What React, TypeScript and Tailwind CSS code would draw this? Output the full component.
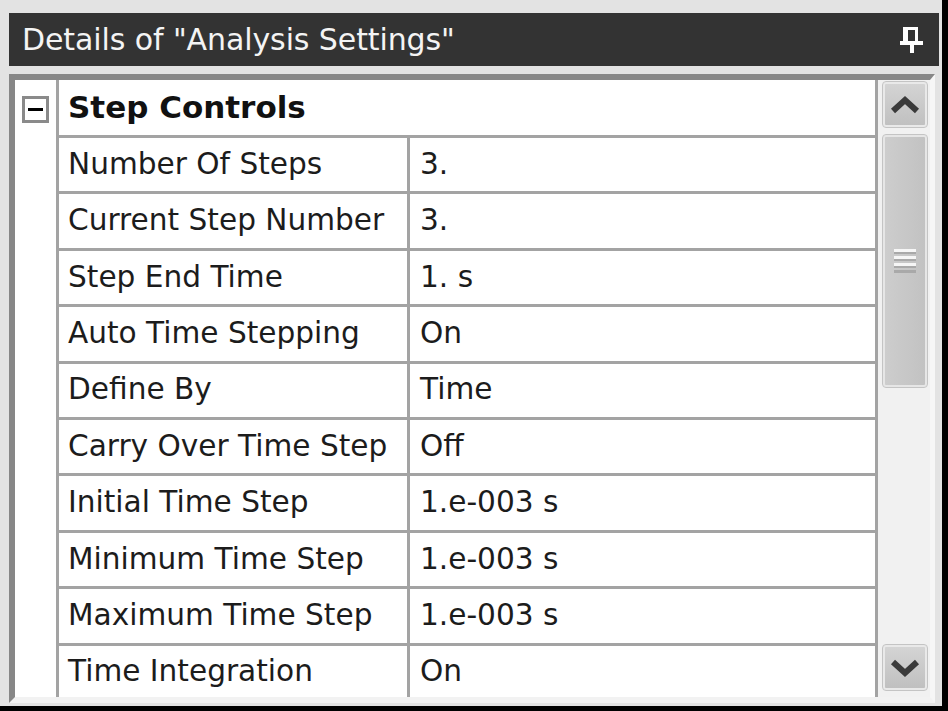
import React from "react";

const rows: [string, string][] = [
  ["Number Of Steps", "3."],
  ["Current Step Number", "3."],
  ["Step End Time", "1. s"],
  ["Auto Time Stepping", "On"],
  ["Define By", "Time"],
  ["Carry Over Time Step", "Off"],
  ["Initial Time Step", "1.e-003 s"],
  ["Minimum Time Step", "1.e-003 s"],
  ["Maximum Time Step", "1.e-003 s"],
  ["Time Integration", "On"],
];

function Pin() {
  return (
    <svg width="23" height="26" viewBox="0 0 23 26" fill="#ffffff">
      <rect x="3" y="0" width="15" height="3" />
      <rect x="3" y="0" width="5" height="16" />
      <rect x="15" y="0" width="3" height="16" />
      <rect x="0" y="14" width="23" height="4" />
      <rect x="10" y="18" width="4" height="8" />
    </svg>
  );
}

function Chevron({ down }: { down?: boolean }) {
  return (
    <svg width="30" height="20" viewBox="0 0 30 20">
      <path
        d={down ? "M3 4 L15 15 L27 4" : "M3 16 L15 5 L27 16"}
        fill="none"
        stroke="#3a3a3a"
        strokeWidth="6"
        strokeLinejoin="miter"
      />
    </svg>
  );
}

function ScrollButton({ down }: { down?: boolean }) {
  return (
    <div className="h-[45px] w-[44px] rounded-[3px] border-2 border-[#e9e9e9] bg-gradient-to-b from-[#d4d4d4] to-[#c0c0c0] outline outline-1 outline-[#c4c4c4] flex items-center justify-center">
      <Chevron down={down} />
    </div>
  );
}

export default function App() {
  return (
    <div className="w-[948px] h-[711px] bg-black overflow-hidden" style={{ fontFamily: '"DejaVu Sans", Verdana, sans-serif' }}>
      <div className="w-[942px] h-[706px] bg-[#e3e3e3] pt-[13px] pl-[9px] pr-[3px] pb-[3px] flex flex-col">
        {/* title bar */}
        <div className="h-[53px] w-[930px] bg-[#333333] flex items-center justify-between pl-[13px] pr-[16px] shrink-0">
          <span className="text-[#f4f4f4] text-[30px] leading-none tracking-[-0.1px]">Details of "Analysis Settings"</span>
          <Pin />
        </div>
        {/* frame */}
        <div className="mt-[8px] w-[926px] flex-1 border-t-[6px] border-l-[6px] border-t-[#878787] border-l-[#878787] border-r-[5px] border-b-[6px] border-r-[#f6f6f6] border-b-[#f2f2f2] flex overflow-hidden">
          {/* gutter */}
          <div className="w-[41px] bg-white shrink-0">
            <div className="h-[58px] flex items-center pl-[7px]">
              <div className="w-[27px] h-[27px] border-[3px] border-[#8a8a8a] bg-white flex items-center justify-center">
                <div className="w-[15px] h-[3px] bg-black" />
              </div>
            </div>
          </div>
          {/* table */}
          <div className="w-[822px] shrink-0 border-l-[3px] border-r-[3px] border-[#a3a3a3] bg-white overflow-hidden text-[#1c1c1c]">
            <div className="h-[58px] border-b-[3px] border-[#a3a3a3] flex items-center pl-[9px]">
              <span className="font-bold text-[31px] leading-none text-[#111111]">Step Controls</span>
            </div>
            {rows.map(([k, v]) => (
              <div key={k} className="h-[56.4px] border-b-[3px] border-[#a3a3a3] flex shrink-0">
                <div className="w-[351px] border-r-[3px] border-[#a3a3a3] flex items-center pl-[9px] text-[29.6px] leading-none whitespace-nowrap">
                  {k}
                </div>
                <div className="flex-1 flex items-center pl-[10px] text-[29.6px] leading-none whitespace-nowrap">{v}</div>
              </div>
            ))}
          </div>
          {/* scrollbar */}
          <div className="w-[52px] shrink-0 bg-[#f1f1f1] flex flex-col pl-[5px] pr-[3px]">
            <div className="mt-[2px]">
              <ScrollButton />
            </div>
            <div className="mt-[8px] h-[252px] w-[44px] rounded-[3px] border-2 border-[#e6e6e6] outline outline-1 outline-[#c4c4c4] bg-gradient-to-r from-[#cdcdcd] to-[#c2c2c2] flex items-center justify-center">
              <svg width="22" height="24" viewBox="0 0 22 24">
                <rect x="0" y="0" width="22" height="3" fill="#f6f6f6" />
                <rect x="0" y="3" width="22" height="2" fill="#a9a9a9" />
                <rect x="0" y="7" width="22" height="3" fill="#f6f6f6" />
                <rect x="0" y="10" width="22" height="2" fill="#a9a9a9" />
                <rect x="0" y="14" width="22" height="3" fill="#f6f6f6" />
                <rect x="0" y="17" width="22" height="2" fill="#a9a9a9" />
                <rect x="0" y="21" width="22" height="3" fill="#a9a9a9" />
              </svg>
            </div>
            <div className="flex-1" />
            <div className="mb-[7px]">
              <ScrollButton down />
            </div>
          </div>
        </div>
      </div>
    </div>
  );
}
